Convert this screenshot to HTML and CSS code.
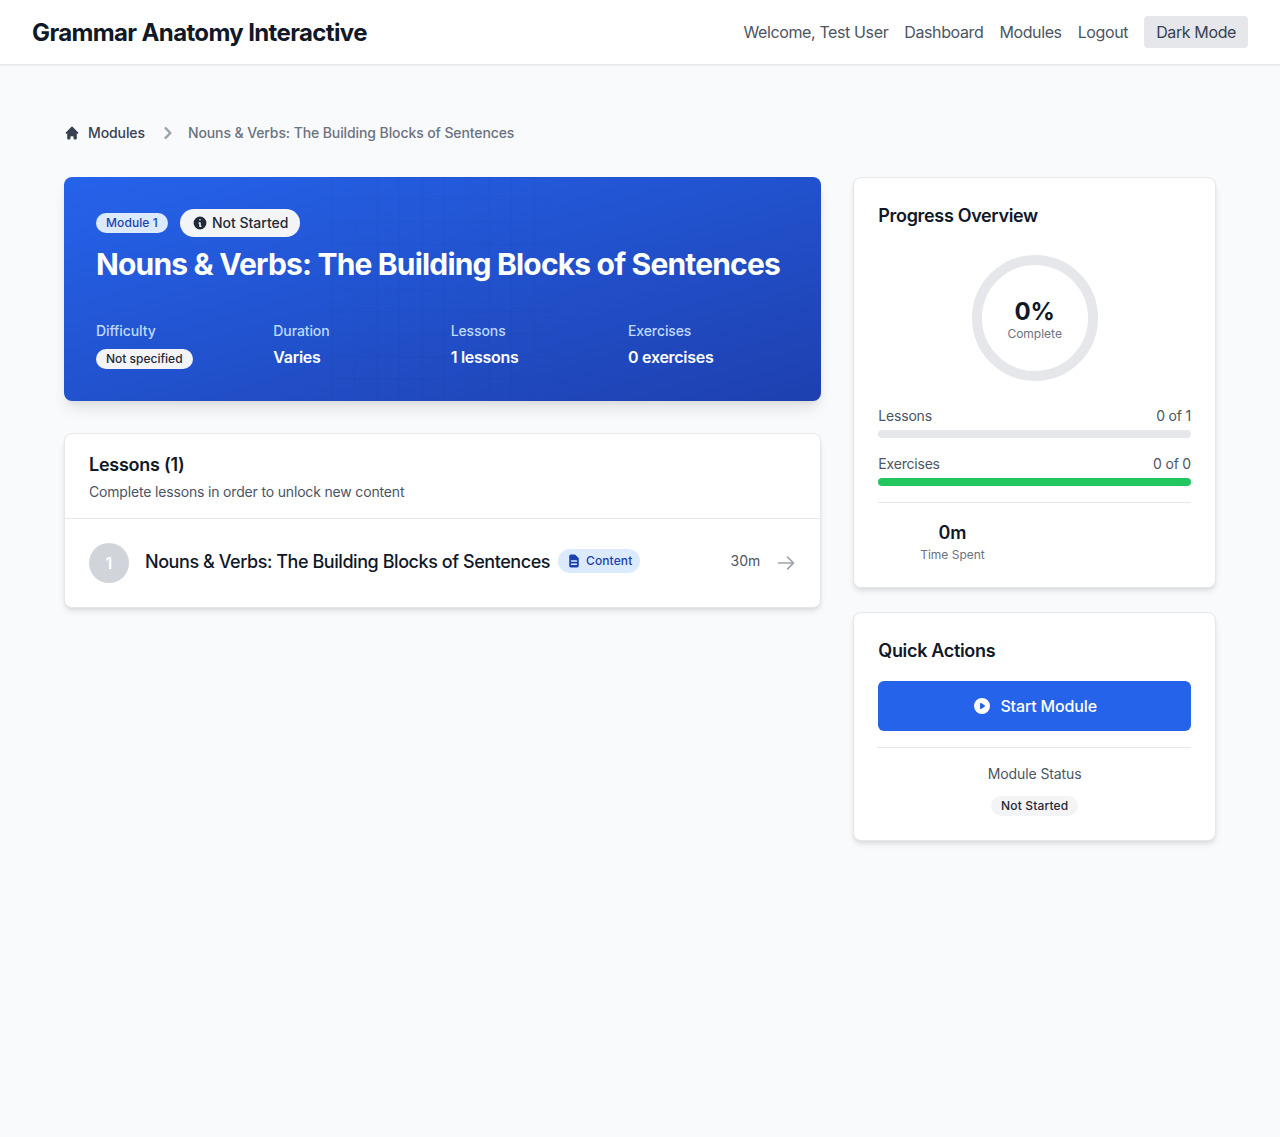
FILE: index.html
```html
<!DOCTYPE html>
<html lang="en">
<head>
    <meta charset="UTF-8" />
    <meta name="viewport" content="width=device-width, initial-scale=1" />
    <title>Grammar Anatomy Interactive</title>
    <link rel="stylesheet" href="styles.css">
</head>
<body>
    <header class="topbar">
        <a class="brand">Grammar Anatomy Interactive</a>
        <nav class="topnav">
            <span>Welcome, Test User</span>
            <a>Dashboard</a>
            <a>Modules</a>
            <a>Logout</a>
            <button class="theme-btn">Dark Mode</button>
        </nav>
    </header>

    <main class="page">
        <nav class="crumbs">
            <svg class="crumb-home" viewBox="0 0 20 20" fill="currentColor"><path d="M10.707 2.293a1 1 0 00-1.414 0l-7 7a1 1 0 001.414 1.414L4 10.414V17a1 1 0 001 1h2a1 1 0 001-1v-2a1 1 0 011-1h2a1 1 0 011 1v2a1 1 0 001 1h2a1 1 0 001-1v-6.586l.293.293a1 1 0 001.414-1.414l-7-7z"/></svg>
            <a class="crumb-link">Modules</a>
            <svg class="crumb-sep" viewBox="0 0 20 20" fill="currentColor"><path fill-rule="evenodd" d="M7.293 14.707a1 1 0 010-1.414L10.586 10 7.293 6.707a1 1 0 011.414-1.414l4 4a1 1 0 010 1.414l-4 4a1 1 0 01-1.414 0z" clip-rule="evenodd"/></svg>
            <span class="crumb-current">Nouns &amp; Verbs: The Building Blocks of Sentences</span>
        </nav>

        <div class="layout">
            <div class="main-col">
                <section class="hero">
                    <div class="hero-badges">
                        <span class="badge-module">Module 1</span>
                        <span class="badge-status">
                            <svg viewBox="0 0 20 20" fill="currentColor"><path fill-rule="evenodd" d="M18 10a8 8 0 11-16 0 8 8 0 0116 0zm-7-4a1 1 0 11-2 0 1 1 0 012 0zM9 9a1 1 0 000 2v3a1 1 0 001 1h1a1 1 0 100-2v-3a1 1 0 00-1-1H9z" clip-rule="evenodd"/></svg>
                            Not Started
                        </span>
                    </div>
                    <h1>Nouns &amp; Verbs: The Building Blocks of Sentences</h1>
                    <div class="hero-stats">
                        <div>
                            <div class="stat-label">Difficulty</div>
                            <span class="badge-small">Not specified</span>
                        </div>
                        <div>
                            <div class="stat-label">Duration</div>
                            <div class="stat-value">Varies</div>
                        </div>
                        <div>
                            <div class="stat-label">Lessons</div>
                            <div class="stat-value">1 lessons</div>
                        </div>
                        <div>
                            <div class="stat-label">Exercises</div>
                            <div class="stat-value">0 exercises</div>
                        </div>
                    </div>
                </section>

                <section class="card lessons">
                    <div class="lessons-head">
                        <h2>Lessons (1)</h2>
                        <p>Complete lessons in order to unlock new content</p>
                    </div>
                    <div class="lesson-row">
                        <div class="lesson-num">1</div>
                        <div class="lesson-title">Nouns &amp; Verbs: The Building Blocks of Sentences</div>
                        <span class="badge-type">
                            <svg viewBox="0 0 20 20" fill="currentColor"><path fill-rule="evenodd" d="M4 4a2 2 0 012-2h4.586A2 2 0 0112 2.586L15.414 6A2 2 0 0116 7.414V16a2 2 0 01-2 2H6a2 2 0 01-2-2V4zm2 6a1 1 0 011-1h6a1 1 0 110 2H7a1 1 0 01-1-1zm1 3a1 1 0 100 2h6a1 1 0 100-2H7z" clip-rule="evenodd"/></svg>
                            Content
                        </span>
                        <span class="lesson-time">30m</span>
                        <svg class="lesson-arrow" viewBox="0 0 24 24" fill="none" stroke="currentColor" stroke-width="2" stroke-linecap="round" stroke-linejoin="round"><path d="M14 5l7 7m0 0l-7 7m7-7H3"/></svg>
                    </div>
                </section>
            </div>

            <aside class="side-col">
                <section class="card side-card">
                    <h3>Progress Overview</h3>
                    <div class="ring">
                        <div class="ring-value">0%</div>
                        <div class="ring-label">Complete</div>
                    </div>
                    <div class="bar-row">
                        <div class="bar-text"><span>Lessons</span><span>0 of 1</span></div>
                        <div class="bar"></div>
                    </div>
                    <div class="bar-row">
                        <div class="bar-text"><span>Exercises</span><span>0 of 0</span></div>
                        <div class="bar bar-full"></div>
                    </div>
                    <div class="time-grid">
                        <div class="time-cell">
                            <div class="time-value">0m</div>
                            <div class="time-label">Time Spent</div>
                        </div>
                    </div>
                </section>

                <section class="card side-card">
                    <h3 class="actions-title">Quick Actions</h3>
                    <button class="start-btn">
                        <svg viewBox="0 0 20 20" fill="currentColor"><path fill-rule="evenodd" d="M10 18a8 8 0 100-16 8 8 0 000 16zM9.555 7.168A1 1 0 008 8v4a1 1 0 001.555.832l3-2a1 1 0 000-1.664l-3-2z" clip-rule="evenodd"/></svg>
                        Start Module
                    </button>
                    <div class="status-box">
                        <div class="status-label">Module Status</div>
                        <span class="badge-gray">Not Started</span>
                    </div>
                </section>
            </aside>
        </div>
    </main>
</body>
</html>
```

FILE: styles.css
```css
* {
    box-sizing: border-box;
    margin: 0;
    padding: 0;
}

body {
    background-color: #f9fafb;
    color: #111827;
    font-family: Inter, "Liberation Sans", sans-serif;
    min-height: 1137px;
}

/* top bar */
.topbar {
    height: 65px;
    background: #fff;
    border-bottom: 1px solid #e5e7eb;
    box-shadow: 0 1px 2px rgba(0, 0, 0, 0.05);
    display: flex;
    justify-content: space-between;
    align-items: center;
    padding: 0 32px;
}

.brand {
    font-size: 24px;
    font-weight: 700;
    line-height: 32px;
    letter-spacing: -0.63px;
    color: #111827;
    padding-top: 2px;
}

.topnav {
    display: flex;
    align-items: center;
    gap: 16px;
    font-size: 16px;
    letter-spacing: -0.38px;
    color: #4b5563;
}

.theme-btn {
    font: inherit;
    letter-spacing: inherit;
    color: #374151;
    background: #e5e7eb;
    border: none;
    border-radius: 4px;
    padding: 4px 12px;
    height: 32px;
}

.page {
    padding: 48px 64px;
}

/* breadcrumb */
.crumbs {
    display: flex;
    align-items: center;
    font-size: 14px;
    line-height: 20px;
    font-weight: 500;
    letter-spacing: -0.1px;
    margin: 8px 0 32px;
}

.crumb-home {
    width: 16px;
    height: 16px;
    margin-right: 8px;
    color: #374151;
}

.crumb-link {
    color: #374151;
}

.crumb-sep {
    width: 24px;
    height: 24px;
    margin: 0 8px 0 11px;
    color: #9ca3af;
}

.crumb-current {
    color: #6b7280;
}

.layout {
    display: grid;
    grid-template-columns: repeat(3, 1fr);
    gap: 32px;
    align-items: start;
}

.main-col {
    grid-column: span 2;
    display: flex;
    flex-direction: column;
    gap: 32px;
}

.side-col {
    display: flex;
    flex-direction: column;
    gap: 24px;
}

/* hero */
.hero {
    position: relative;
    height: 224px;
    padding: 32px;
    border-radius: 8px;
    color: #fff;
    background-image: linear-gradient(to bottom right, #2563eb 0%, #1e40af 100%);
    box-shadow: 0 10px 15px -3px rgba(0, 0, 0, 0.1), 0 4px 6px -2px rgba(0, 0, 0, 0.05);
}

/* faint square grid, one hero-height wide, centred */
.hero::before {
    content: "";
    position: absolute;
    top: 0;
    bottom: 0;
    left: calc(50% - 112px);
    width: 224px;
    background-image:
        linear-gradient(to right, rgba(0, 0, 0, 0.04) 1px, transparent 1px),
        linear-gradient(to bottom, rgba(0, 0, 0, 0.04) 1px, transparent 1px);
    background-size: 22.4px 22.4px;
    background-position: 1px 0;
}

.hero > * {
    position: relative;
}

.hero-badges {
    display: flex;
    align-items: center;
    gap: 12px;
    height: 28px;
}

.badge-module {
    background: #dbeafe;
    color: #1e40af;
    font-size: 12px;
    font-weight: 500;
    line-height: 20px;
    letter-spacing: 0.1px;
    padding: 0 10px;
    border-radius: 9999px;
}

.badge-status {
    display: inline-flex;
    align-items: center;
    gap: 4px;
    background: #f3f4f6;
    color: #1f2937;
    font-size: 14px;
    font-weight: 500;
    line-height: 20px;
    padding: 4px 12px;
    border-radius: 9999px;
}

.badge-status svg {
    width: 16px;
    height: 16px;
}

.hero h1 {
    font-size: 30px;
    font-weight: 700;
    line-height: 36px;
    letter-spacing: -0.82px;
    white-space: nowrap;
    margin-top: 9px;
}

.hero-stats {
    display: grid;
    grid-template-columns: repeat(4, 1fr);
    gap: 16px;
    margin-top: 39px;
}

.stat-label {
    font-size: 14px;
    font-weight: 500;
    line-height: 20px;
    letter-spacing: -0.1px;
    color: #bfdbfe;
}

.stat-value {
    font-size: 16px;
    font-weight: 600;
    line-height: 24px;
    letter-spacing: -0.27px;
    margin-top: 4px;
}

.badge-small {
    display: inline-block;
    background: #f3f4f6;
    color: #1f2937;
    font-size: 12px;
    font-weight: 500;
    line-height: 20px;
    padding: 0 10px;
    border-radius: 9999px;
    margin-top: 8px;
}

/* cards */
.card {
    background: #fff;
    border: 1px solid #e5e7eb;
    border-radius: 8px;
    box-shadow: 0 4px 6px -1px rgba(0, 0, 0, 0.1), 0 2px 4px -1px rgba(0, 0, 0, 0.06);
}

.lessons-head {
    padding: 17px 24px 16px;
    border-bottom: 1px solid #e5e7eb;
    height: 85px;
}

.lessons-head h2 {
    font-size: 18px;
    font-weight: 600;
    line-height: 28px;
    letter-spacing: -0.25px;
}

.lessons-head p {
    font-size: 14px;
    line-height: 20px;
    letter-spacing: -0.17px;
    color: #4b5563;
    margin-top: 3px;
}

.lesson-row {
    display: flex;
    align-items: center;
    padding: 24px;
    height: 88px;
}

.lesson-num {
    width: 40px;
    height: 40px;
    flex: none;
    border-radius: 50%;
    background: #d1d5db;
    color: #fff;
    display: flex;
    align-items: center;
    justify-content: center;
    font-size: 16px;
    font-weight: 600;
    margin-right: 16px;
}

.lesson-title {
    font-size: 18px;
    font-weight: 500;
    line-height: 28px;
    letter-spacing: -0.44px;
    margin: -3px 8px 0 0;
}

.badge-type {
    display: inline-flex;
    align-items: center;
    gap: 4px;
    background: #dbeafe;
    color: #1e40af;
    font-size: 12px;
    font-weight: 500;
    line-height: 16px;
    letter-spacing: 0.1px;
    padding: 4px 8px;
    border-radius: 9999px;
    margin-top: -4px;
}

.badge-type svg {
    width: 16px;
    height: 16px;
}

.lesson-time {
    margin: -6px 0 0 auto;
    font-size: 14px;
    color: #4b5563;
}

.lesson-arrow {
    width: 20px;
    height: 20px;
    margin-left: 16px;
    color: #9ca3af;
}

/* side */
.side-card {
    padding: 24px;
}

.side-card h3 {
    font-size: 18px;
    font-weight: 600;
    line-height: 28px;
    letter-spacing: -0.33px;
}

.ring {
    width: 126px;
    height: 126px;
    margin: 25px auto;
    padding-top: 4px;
    border: 10px solid #e5e7eb;
    border-radius: 50%;
    display: flex;
    flex-direction: column;
    align-items: center;
    justify-content: center;
}

.ring-value {
    font-size: 24px;
    font-weight: 700;
    line-height: 28px;
}

.ring-label {
    font-size: 12px;
    line-height: 16px;
    color: #6b7280;
}

.bar-row {
    margin-bottom: 16px;
}

.bar-text {
    display: flex;
    justify-content: space-between;
    font-size: 14px;
    line-height: 20px;
    letter-spacing: -0.2px;
    color: #4b5563;
    margin-bottom: 4px;
}

.bar {
    height: 8px;
    border-radius: 9999px;
    background: #e5e7eb;
}

.bar-full {
    background: #22c55e;
}

.time-grid {
    display: grid;
    grid-template-columns: repeat(2, 1fr);
    gap: 16px;
    border-top: 1px solid #e5e7eb;
    padding-top: 16px;
}

.time-cell {
    text-align: center;
}

.time-value {
    font-size: 18px;
    font-weight: 600;
    line-height: 28px;
}

.time-label {
    font-size: 12px;
    line-height: 16px;
    color: #6b7280;
}

.actions-title {
    margin-bottom: 16px;
}

.start-btn {
    width: 100%;
    height: 50px;
    display: flex;
    align-items: center;
    justify-content: center;
    gap: 8px;
    border: none;
    border-radius: 6px;
    background: #2563eb;
    color: #fff;
    font-family: inherit;
    font-size: 16px;
    font-weight: 500;
    letter-spacing: -0.15px;
}

.start-btn svg {
    width: 20px;
    height: 20px;
}

.status-box {
    margin-top: 16px;
    border-top: 1px solid #e5e7eb;
    padding-top: 16px;
    text-align: center;
}

.status-label {
    font-size: 14px;
    line-height: 20px;
    letter-spacing: -0.1px;
    color: #4b5563;
    margin-bottom: 10px;
}

.badge-gray {
    display: inline-block;
    background: #f3f4f6;
    color: #1f2937;
    font-size: 12px;
    font-weight: 500;
    line-height: 20px;
    letter-spacing: 0.15px;
    padding: 0 10px;
    border-radius: 9999px;
}
```
